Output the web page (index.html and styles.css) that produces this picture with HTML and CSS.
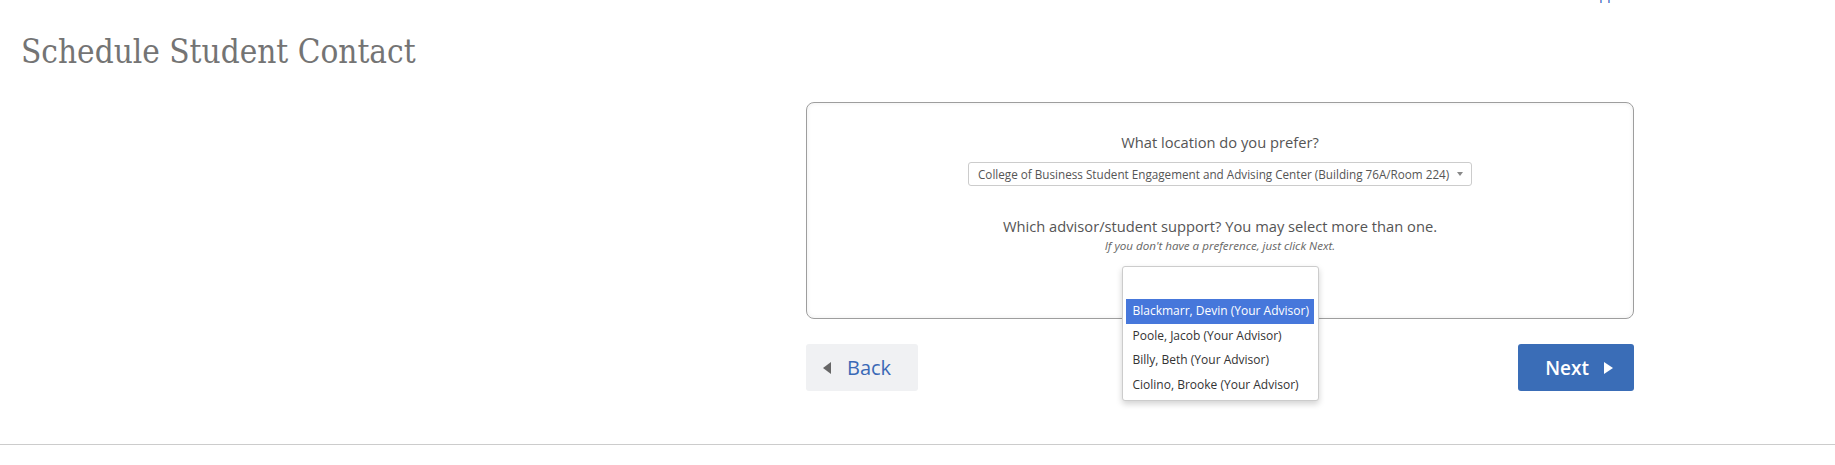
FILE: index.html
```html
<!DOCTYPE html>
<html lang="en">
<head>
<meta charset="utf-8">
<title>Schedule Student Contact</title>
<link rel="stylesheet" href="styles.css">
</head>
<body>
<div class="topbar"><a class="top-link" href="#">Support</a></div>
<h1 class="page-title">Schedule Student Contact</h1>
<main class="layout">
  <div class="spacer"></div>
  <section class="wizard">
    <div class="card">
      <p class="question">What location do you prefer?</p>
      <div class="select">
        <span class="select-text">College of Business Student Engagement and Advising Center (Building 76A/Room 224)</span>
        <span class="caret-down"></span>
      </div>
      <p class="question question-2">Which advisor/student support? You may select more than one.</p>
      <p class="hint">If you don't have a preference, just click Next.</p>
      <div class="picker">
        <div class="picker-menu">
          <ul class="options">
            <li class="option selected">Blackmarr, Devin (Your Advisor)</li>
            <li class="option">Poole, Jacob (Your Advisor)</li>
            <li class="option">Billy, Beth (Your Advisor)</li>
            <li class="option">Ciolino, Brooke (Your Advisor)</li>
          </ul>
        </div>
      </div>
    </div>
    <div class="actions">
      <button class="btn btn-back"><span class="tri-left"></span><span>Back</span></button>
      <button class="btn btn-next"><span>Next</span><span class="tri-right"></span></button>
    </div>
  </section>
</main>
<hr class="rule">
</body>
</html>
```
FILE: styles.css
```css
html, body {
  margin: 0;
  padding: 0;
  background: #ffffff;
}
body {
  font-family: "Open Sans", "Liberation Sans", sans-serif;
  color: #555555;
  overflow: hidden;
}
.topbar {
  height: 0;
  display: flex;
  justify-content: flex-end;
  padding-right: 202px;
}
.top-link {
  font-size: 13px;
  line-height: 13px;
  margin-top: -11.5px;
  color: #1f4fb8;
  text-decoration: none;
}
.page-title {
  margin: 32px 0 0 0;
  padding-left: 21px;
  font-family: "DejaVu Serif Condensed", "DejaVu Serif", serif;
  font-weight: normal;
  font-size: 33px;
  line-height: 40px;
  color: #747474;
}
.layout {
  display: grid;
  grid-template-columns: 785px 828px;
  padding-left: 21px;
  margin-top: 30px;
}
.card {
  border: 1px solid #9e9e9e;
  border-radius: 8px;
  box-shadow: inset 0 0 5px rgba(0, 0, 0, 0.07);
  padding: 29px 20px 18px;
  text-align: center;
  height: 217px;
  box-sizing: border-box;
}
.question {
  margin: 0;
  font-size: 14.7px;
  line-height: 20px;
  color: #555555;
}
.select {
  margin: 10px auto 0;
  width: 504px;
  height: 24px;
  box-sizing: border-box;
  border: 1px solid #cccccc;
  border-radius: 3px;
  display: flex;
  align-items: center;
  justify-content: space-between;
  padding: 0 8px 0 9px;
  background: #ffffff;
}
.select-text {
  font-size: 11.7px;
  color: #555555;
  white-space: nowrap;
}
.caret-down {
  width: 0;
  height: 0;
  border-left: 3.5px solid transparent;
  border-right: 3.5px solid transparent;
  border-top: 4px solid #888888;
}
.question-2 {
  margin-top: 30px;
}
.hint {
  margin: 2px 0 0 0;
  font-size: 11.6px;
  line-height: 15px;
  font-style: italic;
  color: #666666;
}
.picker {
  position: relative;
  margin: 13px auto 0;
  width: 197px;
  height: 33px;
}
.picker-menu {
  position: absolute;
  top: 0;
  left: 0;
  right: 0;
  z-index: 2;
  background: #ffffff;
  border: 1px solid #cccccc;
  border-radius: 3px;
  box-shadow: 0 3px 6px rgba(0, 0, 0, 0.18);
  padding-top: 32px;
  text-align: left;
}
.options {
  list-style: none;
  margin: 0;
  padding: 0 4px 3px 3px;
}
.option {
  font-size: 12px;
  line-height: 16.5px;
  padding: 4px 7px;
  color: #333333;
  white-space: nowrap;
}
.option.selected {
  background: #4677db;
  color: #ffffff;
}
.actions {
  margin-top: 25px;
  display: flex;
  justify-content: space-between;
}
.btn {
  height: 47px;
  border: 0;
  border-radius: 3px;
  display: flex;
  align-items: center;
  font-family: "Open Sans", "Liberation Sans", sans-serif;
  font-size: 19px;
  cursor: pointer;
}
.btn-back {
  background: #f0f1f3;
  color: #3a69b6;
  font-size: 20px;
  padding: 0 27px 0 17px;
  gap: 16px;
}
.btn-next {
  background: #3a6db7;
  color: #ffffff;
  font-weight: 600;
  padding: 0 21px 0 27px;
  gap: 15px;
}
.tri-left {
  width: 0;
  height: 0;
  border-top: 6px solid transparent;
  border-bottom: 6px solid transparent;
  border-right: 8px solid #666666;
}
.tri-right {
  width: 0;
  height: 0;
  border-top: 6.5px solid transparent;
  border-bottom: 6.5px solid transparent;
  border-left: 9px solid #ffffff;
}
.rule {
  margin: 53px 0 0 0;
  border: 0;
  border-top: 1px solid #cccccc;
  height: 0;
}
```
